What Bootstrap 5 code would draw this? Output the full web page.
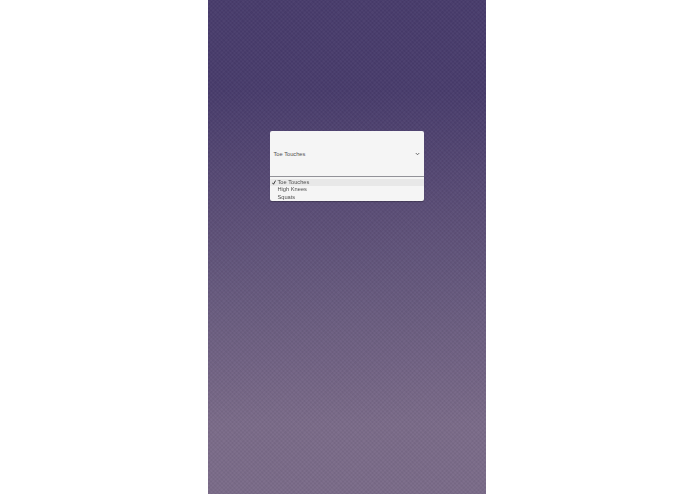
<!DOCTYPE html>
<html lang="en">
<head>
<meta charset="utf-8">
<title>Exercise picker</title>
<link href="https://cdn.jsdelivr.net/npm/bootstrap@5.3.0/dist/css/bootstrap.min.css" rel="stylesheet">
<style>
html, body { height: 100%; background: #fff; }
body { font-family: "Liberation Sans", Arial, sans-serif; overflow: hidden; }
.stage {
  width: 278px; height: 494px; margin-left: 208px; padding-top: 131px;
  background:
    repeating-linear-gradient(45deg, rgba(255,255,255,.015) 0 1.5px, rgba(0,0,0,.015) 1.5px 3px),
    repeating-linear-gradient(-45deg, rgba(255,255,255,.015) 0 1.5px, rgba(0,0,0,.015) 1.5px 3px),
    linear-gradient(180deg, #483c6c 0, #483c6c 90px, #7a6b88 425px, #7a6b88 100%);
}
.picker { width: 154px; font-size: 5.7px; line-height: 7.5px; color: #505050; filter: blur(.3px); }
.picker-head { height: 46px; padding: 1.5px 3.5px 0; background: #f5f5f5; border-radius: 2px 2px 0 0; border-bottom: 1px solid #96969c; }
.picker-menu { background: #f5f5f5; border-radius: 0 0 2px 2px; padding-top: 1.5px; box-shadow: 0 .5px 1px rgba(0,0,0,.25); }
.picker-item { height: 7.5px; padding-left: 2px; gap: 1.5px; }
.picker-item.is-current { background: #e8e8e8; }
.tick { width: 4px; height: 5px; flex: none; }
.chev { width: 5px; height: 4px; margin-right: .5px; }
</style>
</head>
<body>
<main class="stage">
  <div class="picker mx-auto">
    <div class="picker-head d-flex align-items-center justify-content-between">
      <span>Toe Touches</span>
      <svg class="chev" viewBox="0 0 10 8" aria-hidden="true"><path d="M1.5 2l3.5 3.5L8.5 2" fill="none" stroke="#444" stroke-width="1.5"/></svg>
    </div>
    <div class="picker-menu">
      <div class="picker-item is-current d-flex align-items-center">
        <svg class="tick" viewBox="0 0 8 10" aria-hidden="true"><path d="M.8 5.5l2.2 3L7.2 1" fill="none" stroke="#222" stroke-width="1.7"/></svg>
        <span>Toe Touches</span>
      </div>
      <div class="picker-item d-flex align-items-center"><span class="tick"></span><span>High Knees</span></div>
      <div class="picker-item d-flex align-items-center"><span class="tick"></span><span>Squats</span></div>
    </div>
  </div>
</main>
<script src="https://cdn.jsdelivr.net/npm/bootstrap@5.3.0/dist/js/bootstrap.bundle.min.js"></script>
</body>
</html>
